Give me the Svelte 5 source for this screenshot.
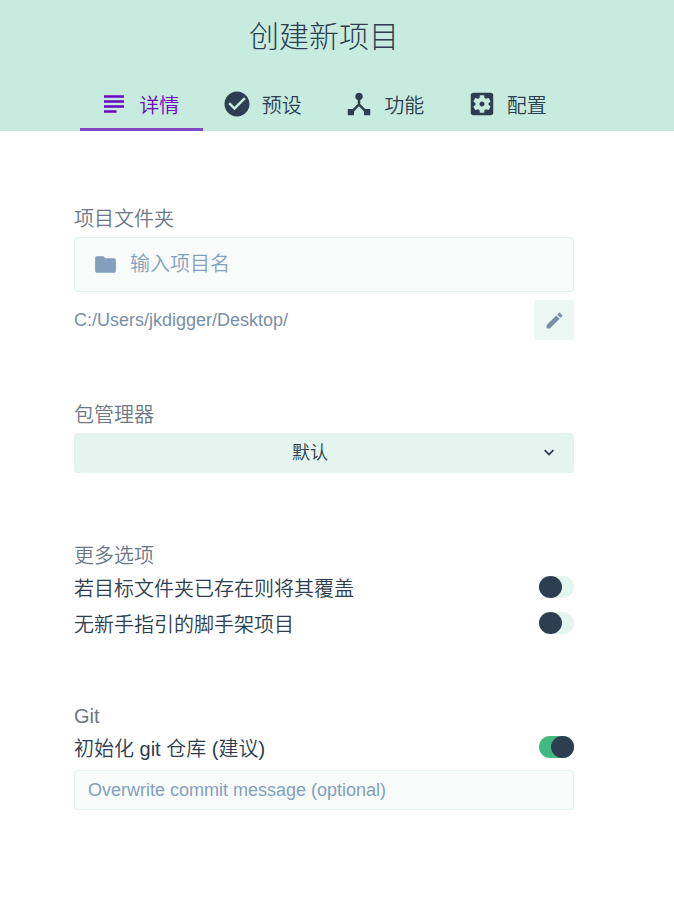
<script>
  const tabs = [
    {
      id: 'details',
      label: '详情',
      path: 'M14 17H4v2h10v-2zm6-8H4v2h16V9zM4 15h16v-2H4v2zM4 5v2h16V5H4z'
    },
    {
      id: 'presets',
      label: '预设',
      path: 'M12 2C6.48 2 2 6.48 2 12s4.48 10 10 10 10-4.48 10-10S17.52 2 12 2zm-2 15l-5-5 1.41-1.41L10 14.17l7.59-7.59L19 8l-9 9z'
    },
    {
      id: 'features',
      label: '功能',
      path: 'M17 16l-4-4V8.82C14.16 8.4 15 7.3 15 6c0-1.66-1.34-3-3-3S9 4.34 9 6c0 1.3.84 2.4 2 2.82V12l-4 4H3v5h5v-3.05l4-4.2 4 4.2V21h5v-5h-4z'
    },
    {
      id: 'config',
      label: '配置',
      path: 'M12 10c-1.1 0-2 .9-2 2s.9 2 2 2 2-.9 2-2-.9-2-2-2zm7-7H5c-1.11 0-2 .9-2 2v14c0 1.1.89 2 2 2h14c1.11 0 2-.9 2-2V5c0-1.1-.89-2-2-2zm-1.75 9c0 .23-.02.46-.05.68l1.48 1.16c.13.11.17.3.08.45l-1.4 2.42c-.09.15-.27.21-.43.15l-1.74-.7c-.36.28-.76.51-1.18.69l-.26 1.85c-.03.17-.18.3-.35.3h-2.8c-.17 0-.32-.13-.35-.29l-.26-1.85c-.43-.18-.82-.41-1.18-.69l-1.74.7c-.16.06-.34 0-.43-.15l-1.4-2.42c-.09-.15-.05-.34.08-.45l1.48-1.16c-.03-.23-.05-.46-.05-.69 0-.23.02-.46.05-.68l-1.48-1.16c-.13-.11-.17-.3-.08-.45l1.4-2.42c.09-.15.27-.21.43-.15l1.74.7c.36-.28.76-.51 1.18-.69l.26-1.85c.03-.17.18-.3.35-.3h2.8c.17 0 .32.13.35.29l.26 1.85c.43.18.82.41 1.18.69l1.74-.7c.16-.06.34 0 .43.15l1.4 2.42c.09.15.05.34-.08.45l-1.48 1.16c.03.23.05.46.05.69z'
    }
  ];

  let active = $state('details');
  let folder = $state('');
  let manager = $state('default');
  let overwrite = $state(false);
  let bare = $state(false);
  let git = $state(true);
  let message = $state('');
</script>

<div class="page">
  <header>
    <h1>创建新项目</h1>
    <div class="tabs" role="tablist">
      {#each tabs as tab (tab.id)}
        <button
          type="button"
          class="tab"
          class:active={active === tab.id}
          role="tab"
          aria-selected={active === tab.id}
          onclick={() => (active = tab.id)}
        >
          <svg viewBox="0 0 24 24" aria-hidden="true"><path d={tab.path} /></svg>
          <span>{tab.label}</span>
        </button>
      {/each}
    </div>
  </header>

  <form onsubmit={(event) => event.preventDefault()}>
    <section>
      <label class="title" for="folder">项目文件夹</label>
      <div class="field large">
        <svg viewBox="0 0 24 24" aria-hidden="true">
          <path d="M10 4H4c-1.1 0-1.99.9-1.99 2L2 18c0 1.1.9 2 2 2h16c1.1 0 2-.9 2-2V8c0-1.1-.9-2-2-2h-8l-2-2z" />
        </svg>
        <input id="folder" type="text" placeholder="输入项目名" bind:value={folder} />
      </div>
      <div class="location">
        <span>C:/Users/jkdigger/Desktop/</span>
        <button type="button" class="edit" aria-label="编辑">
          <svg viewBox="0 0 24 24" aria-hidden="true">
            <path d="M3 17.25V21h3.75L17.81 9.94l-3.75-3.75L3 17.25zM20.71 7.04c.39-.39.39-1.02 0-1.41l-2.34-2.34c-.39-.39-1.02-.39-1.41 0l-1.83 1.83 3.75 3.75 1.83-1.83z" />
          </svg>
        </button>
      </div>
    </section>

    <section>
      <label class="title" for="manager">包管理器</label>
      <div class="select">
        <select id="manager" bind:value={manager}>
          <option value="default">默认</option>
          <option value="npm">npm</option>
          <option value="yarn">yarn</option>
        </select>
        <svg viewBox="0 0 24 24" aria-hidden="true">
          <path d="M7.41 7.84L12 12.42l4.59-4.58L18 9.25l-6 6-6-6z" />
        </svg>
      </div>
    </section>

    <section class="options">
      <h2 class="title">更多选项</h2>
      <label class="switch">
        <span>若目标文件夹已存在则将其覆盖</span>
        <input type="checkbox" role="switch" bind:checked={overwrite} />
      </label>
      <label class="switch">
        <span>无新手指引的脚手架项目</span>
        <input type="checkbox" role="switch" bind:checked={bare} />
      </label>
    </section>

    <section>
      <h2 class="title">Git</h2>
      <label class="switch">
        <span>初始化 git 仓库 (建议)</span>
        <input type="checkbox" role="switch" bind:checked={git} />
      </label>
      <div class="field">
        <input
          type="text"
          aria-label="Overwrite commit message (optional)"
          placeholder="Overwrite commit message (optional)"
          bind:value={message}
        />
      </div>
    </section>
  </form>
</div>

<style>
  :global(body) {
    margin: 0;
    background: #fff;
  }

  .page {
    color: #2c3e50;
    font-family: 'Liberation Sans', 'Noto Sans CJK SC', sans-serif;
    font-size: 20px;
    font-weight: 350;
  }

  .page * {
    box-sizing: border-box;
  }

  button,
  input,
  select {
    margin: 0;
    border: 0;
    color: inherit;
    font: inherit;
  }

  button {
    cursor: pointer;
  }

  svg {
    flex: none;
    fill: currentColor;
  }

  header {
    display: flex;
    flex-direction: column;
    align-items: center;
    padding-right: 26px;
    background: #c8ebdf;
  }

  h1 {
    margin: 0;
    padding: 14px 0 18px;
    font-size: 30px;
    font-weight: 300;
    line-height: 45px;
  }

  .tabs {
    display: flex;
    width: 100%;
    max-width: 490px;
    margin-left: 2px;
  }

  .tab {
    display: flex;
    flex: 1;
    align-items: center;
    justify-content: center;
    gap: 10px;
    height: 54px;
    padding: 3px 4px 0 0;
    border-bottom: 3px solid transparent;
    background: none;
  }

  .tab svg {
    width: 30px;
    height: 30px;
  }

  .tab.active {
    border-color: #8344c6;
    color: #6806c1;
  }

  form {
    display: flex;
    flex-direction: column;
    gap: 59px;
    max-width: 526px;
    margin: 0 auto;
    padding: 72px 26px 72px 0;
  }

  .title {
    display: block;
    margin: 0;
    color: #6b7784;
    font-size: 20px;
    font-weight: 350;
    line-height: 32px;
  }

  .field {
    display: flex;
    align-items: center;
    height: 40px;
    margin-top: 2px;
    padding: 0 13px;
    border: 1px solid #e3f4ee;
    border-radius: 3px;
    background: #f7fbfa;
    color: #849fbd;
    font-size: 18px;
  }

  .field.large {
    gap: 12px;
    height: 55px;
    padding: 0 18px;
    font-size: 20px;
  }

  .field svg {
    width: 25px;
    height: 25px;
  }

  .field input {
    flex: 1;
    min-width: 0;
    height: 100%;
    padding: 0;
    outline: 0;
    background: none;
  }

  .field input::placeholder {
    color: #849fbd;
    opacity: 1;
  }

  .location {
    display: flex;
    align-items: center;
    justify-content: space-between;
    margin-top: 8px;
    color: #788fa7;
    font-size: 18px;
  }

  .edit {
    display: flex;
    align-items: center;
    justify-content: center;
    width: 40px;
    height: 40px;
    padding: 0;
    border-radius: 3px;
    background: #eaf7f2;
  }

  .edit svg {
    width: 21px;
    height: 21px;
  }

  .select {
    display: grid;
    align-items: center;
    margin-top: 2px;
  }

  .select select,
  .select svg {
    grid-area: 1 / 1;
  }

  .select select {
    width: 100%;
    height: 40px;
    padding: 0 28px 0 0;
    border-radius: 3px;
    appearance: none;
    background: #e4f4ee;
    font-size: 18px;
    text-align: center;
    text-align-last: center;
  }

  .select svg {
    justify-self: end;
    width: 20px;
    height: 20px;
    margin-right: 15px;
    pointer-events: none;
  }

  .options {
    margin: 8px 0 -3px;
  }

  .switch {
    display: flex;
    align-items: center;
    justify-content: space-between;
    height: 30px;
    margin-bottom: 6px;
    cursor: pointer;
  }

  .switch + .field {
    margin-top: 8px;
  }

  .switch input {
    display: flex;
    flex: none;
    width: 35px;
    height: 22px;
    border-radius: 11px;
    appearance: none;
    background: #e4f4ee;
    cursor: pointer;
  }

  .switch input::before {
    width: 23px;
    height: 22px;
    border-radius: 50%;
    background: #2c3e50;
    content: '';
  }

  .switch input:checked {
    justify-content: flex-end;
    background: #42b983;
  }
</style>
